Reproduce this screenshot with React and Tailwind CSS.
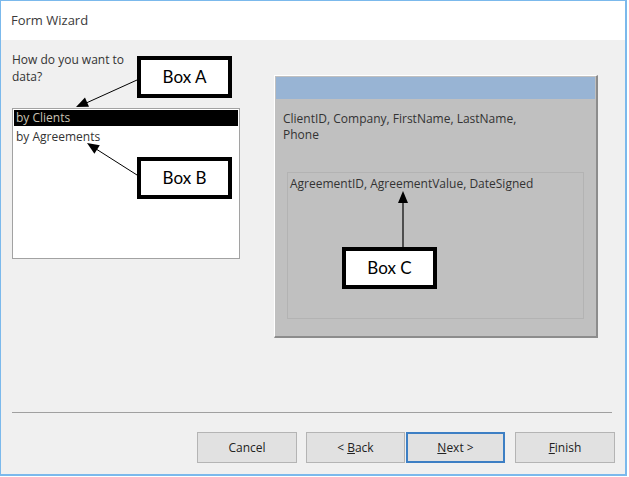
import React from "react";

const ui = { fontFamily: '"Open Sans", "Noto Sans", sans-serif' };
const callout = { fontFamily: 'Lato, "Open Sans", sans-serif' };

function WizardButton({ children, focused, wide }) {
  return (
    <button
      type="button"
      className={`flex h-[31px] items-center justify-center bg-[#e1e1e1] text-[12px] text-[#222] ${
        wide ? "w-[100px]" : "w-[99px]"
      } ${focused ? "border-2 border-[#3d7fc4]" : "border border-[#b4b4b4]"}`}
    >
      {children}
    </button>
  );
}

function Callout({ label, className }) {
  return (
    <div
      className={`absolute flex h-[42px] w-[95px] items-center justify-center border-4 border-black bg-white text-[17px] text-black ${className}`}
      style={callout}
    >
      {label}
    </div>
  );
}

export default function App() {
  return (
    <div className="relative h-[477px] w-[629px] overflow-hidden bg-white" style={ui}>
      <div className="flex h-[476px] w-[627px] flex-col border-t border-l border-r-2 border-b-2 border-[#7bb9ec]">
        {/* title bar */}
        <div className="flex h-[39px] items-center bg-white pl-[10px] text-[13px] text-[#3a3a3a]">
          Form Wizard
        </div>

        {/* body */}
        <div className="flex flex-1 flex-col bg-[#f0f0f0]">
          <div className="flex px-[11px] pt-[12px]">
            <div className="w-[228px]">
              <div className="text-[12px] leading-[16px] text-[#333]">
                <p>How do you want to</p>
                <p className="pt-[1px]">data?</p>
              </div>
              <div className="mt-[23px] h-[151px] border border-[#a2a2a2] bg-white p-[1px] text-[12px]">
                <div className="h-[16px] bg-black pl-[2px] leading-[16px] text-[#c9c3b4]">
                  by Clients
                </div>
                <div className="mt-[2px] h-[18px] pl-[2px] leading-[18px] text-[#333]">
                  by Agreements
                </div>
              </div>
            </div>

            <div className="ml-[34px] mt-[23px] flex h-[263px] w-[324px] flex-col border-t border-l border-white border-r-2 border-b-2 border-r-[#8c8c8c] border-b-[#8c8c8c] bg-[#c0c0c0] p-[1px]">
              <div className="h-[22px] bg-[#98b4d4]" />
              <div className="whitespace-nowrap pl-[7px] pt-[12px] text-[12px] leading-[16px] text-[#333]">
                ClientID, Company, FirstName, LastName,
                <br />
                Phone
              </div>
              <div className="mt-[29px] ml-[11px] h-[147px] w-[297px] whitespace-nowrap border border-[#b3b3b3] pl-[2px] pt-[3px] text-[12px] leading-[16px] text-[#333]">
                AgreementID, AgreementValue, DateSigned
              </div>
            </div>
          </div>

          {/* footer */}
          <div className="mt-auto">
            <div className="ml-[11px] mr-[13px] h-px bg-[#a0a0a0]" />
            <div className="mt-[19px] flex justify-end pb-[11px] pr-[10px]">
              <WizardButton wide>Cancel</WizardButton>
              <div className="ml-[9px] flex">
                <WizardButton>
                  &lt; <span className="ml-[3px] underline">B</span>ack
                </WizardButton>
                <div className="ml-[1px]">
                  <WizardButton focused>
                    <span className="underline">N</span>ext &gt;
                  </WizardButton>
                </div>
              </div>
              <div className="ml-[10px]">
                <WizardButton wide>
                  <span className="underline">F</span>inish
                </WizardButton>
              </div>
            </div>
          </div>
        </div>
      </div>

      {/* annotations */}
      <svg className="pointer-events-none absolute inset-0" width="629" height="477">
        <line x1="137" y1="80" x2="84" y2="104" stroke="black" strokeWidth="1" />
        <polygon points="76,107 89,106.7 85,97.5" fill="black" />
        <line x1="137" y1="175" x2="93" y2="147" stroke="black" strokeWidth="1" />
        <polygon points="87,143 99.8,145.3 94.4,153.7" fill="black" />
        <line x1="403" y1="247" x2="403" y2="200" stroke="black" strokeWidth="1.2" />
        <polygon points="403,191 398,203 408,203" fill="black" />
      </svg>
      <Callout label="Box A" className="left-[137px] top-[56px]" />
      <Callout label="Box B" className="left-[137px] top-[157px]" />
      <Callout label="Box C" className="left-[342px] top-[247px]" />
    </div>
  );
}
